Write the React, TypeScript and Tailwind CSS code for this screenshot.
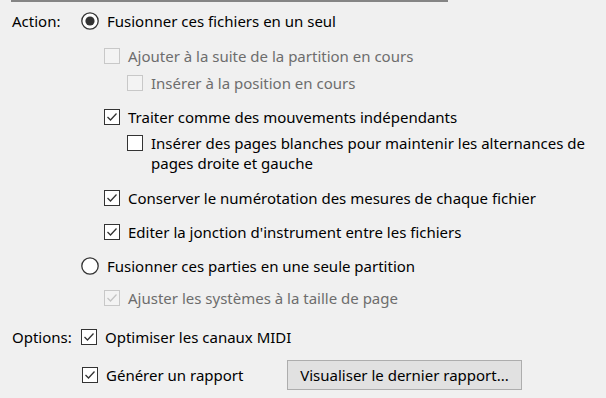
import React from 'react';

type Level = 0 | 1 | 2;

const font = { fontFamily: '"Noto Sans", "Open Sans", sans-serif' };

function Check({ checked = false, disabled = false }: { checked?: boolean; disabled?: boolean }) {
  return (
    <div
      className={`w-[16px] h-[16px] flex-none border flex items-center justify-center ${
        disabled ? 'border-[#c8c8c8] bg-[#f3f3f3]' : 'border-[#333333] bg-white'
      }`}
    >
      {checked && (
        <svg width="14" height="14" viewBox="0 0 14 14">
          <polyline
            points="2.5,7 5.5,10 11.5,3.5"
            fill="none"
            stroke={disabled ? '#c4c4c4' : '#333333'}
            strokeWidth="1.3"
          />
        </svg>
      )}
    </div>
  );
}

function Radio({ checked = false }: { checked?: boolean }) {
  return (
    <svg width="18" height="18" viewBox="0 0 18 18" className="flex-none">
      <circle cx="9" cy="9" r="8.2" fill="#ffffff" stroke="#333333" strokeWidth="1.3" />
      {checked && <circle cx="9" cy="9" r="4.6" fill="#333333" />}
    </svg>
  );
}

function Row({
  label,
  level = 0,
  control,
  text,
  disabled = false,
  mt,
  children,
}: {
  label?: string;
  level?: Level;
  control: React.ReactNode;
  text: React.ReactNode;
  disabled?: boolean;
  mt: string;
  children?: React.ReactNode;
}) {
  const indent = level === 0 ? 'w-[81px]' : level === 1 ? 'w-[104px]' : 'w-[127px]';
  return (
    <div className={`flex items-start ${mt}`}>
      <div className={`${indent} flex-none pl-[12px] leading-[20px] text-black`}>{label}</div>
      <div className="flex-none h-[20px] flex items-center">{control}</div>
      <div className={`pl-[8px] leading-[20px] ${disabled ? 'text-[#6d6d6d]' : 'text-black'}`}>{text}</div>
      {children}
    </div>
  );
}

export default function App() {
  return (
    <div className="w-[606px] h-[398px] bg-[#f0f0f0] overflow-hidden text-[15px]" style={font}>
      <div className="ml-[11px] w-[437px] h-[2px] bg-[#858585]" />

      <Row mt="mt-[9px]" label="Action:" control={<Radio checked />} text="Fusionner ces fichiers en un seul" />
      <Row
        mt="mt-[15px]"
        level={1}
        disabled
        control={<Check disabled />}
        text="Ajouter à la suite de la partition en cours"
      />
      <Row mt="mt-[7px]" level={2} disabled control={<Check disabled />} text="Insérer à la position en cours" />
      <Row mt="mt-[14px]" level={1} control={<Check checked />} text="Traiter comme des mouvements indépendants" />
      <Row
        mt="mt-[6px]"
        level={2}
        control={<Check />}
        text={
          <>
            Insérer des pages blanches pour maintenir les alternances de
            <br />
            pages droite et gauche
          </>
        }
      />
      <Row
        mt="mt-[15px]"
        level={1}
        control={<Check checked />}
        text="Conserver le numérotation des mesures de chaque fichier"
      />
      <Row
        mt="mt-[14px]"
        level={1}
        control={<Check checked />}
        text="Editer la jonction d'instrument entre les fichiers"
      />
      <Row mt="mt-[14px]" control={<Radio />} text="Fusionner ces parties en une seule partition" />
      <Row
        mt="mt-[12px]"
        level={1}
        disabled
        control={<Check checked disabled />}
        text="Ajuster les systèmes à la taille de page"
      />

      <Row mt="mt-[19px]" label="Options:" control={<Check checked />} text="Optimiser les canaux MIDI" />
      <div className="flex items-center mt-[13px]">
        <div className="w-[82px] flex-none" />
        <Check checked />
        <div className="pl-[8px] w-[189px] flex-none leading-[20px] text-black">Générer un rapport</div>
        <button className="w-[235px] h-[30px] border border-[#adadad] bg-[#e1e1e1] text-black leading-[20px] flex items-center justify-center">
          Visualiser le dernier rapport...
        </button>
      </div>
    </div>
  );
}
